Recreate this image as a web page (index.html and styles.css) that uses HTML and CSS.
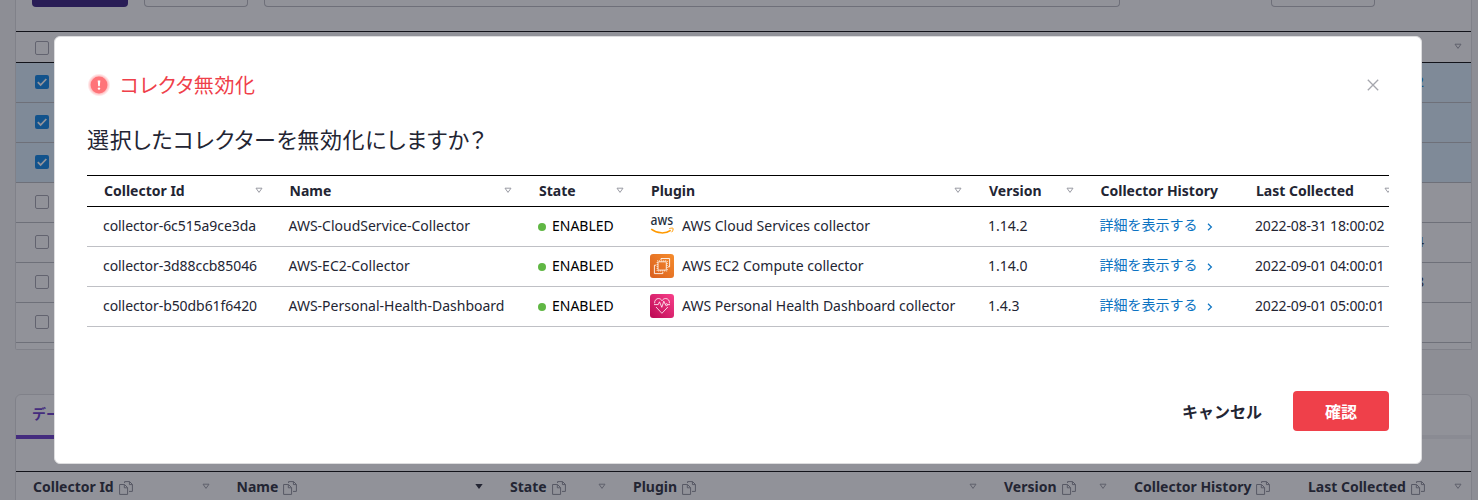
FILE: index.html
```
<!DOCTYPE html>
<html lang="ja">
<head>
<meta charset="utf-8">
<title>コレクタ無効化</title>
<link rel="stylesheet" href="styles.css">
</head>
<body>
<svg class="defs" width="0" height="0">
  <symbol id="sort" viewBox="0 0 8 7"><path d="M1 1.2h6L4 5.4z" fill="none" stroke="currentColor" stroke-width="1"/></symbol>
  <symbol id="sort-on" viewBox="0 0 8 7"><path d="M.3 1h7.4L4 6z" fill="currentColor"/></symbol>
  <symbol id="copy" viewBox="0 0 14 14"><path d="M4.1 3.5H.6v9.900h8V6.600L5.500 3.500H4.100M5.300 3.700v3.100h3.100M5.600 2V.6h5l2.800 2.800v7H10M10.400.7v2.900h2.900" fill="none" stroke="currentColor" stroke-width="1"/></symbol>
  <symbol id="check" viewBox="0 0 14 14"><path d="M2.800 7.200l2.800 2.800 5.700-6" fill="none" stroke="#fff" stroke-width="1.800"/></symbol>
</svg>
<div class="page">
  <section class="card list">
    <div class="toolbar"><span class="btn solid"></span><span class="btn actions"></span><span class="btn search"></span><span class="btn paging"></span></div>
    <div class="row head"><i class="box"></i><svg class="sort"><use href="#sort"/></svg></div>
    <div class="row picked"><i class="box on"><svg><use href="#check"/></svg></i><a class="link">2</a></div>
    <div class="row picked"><i class="box on"><svg><use href="#check"/></svg></i></div>
    <div class="row picked"><i class="box on"><svg><use href="#check"/></svg></i></div>
    <div class="row"><i class="box"></i></div>
    <div class="row"><i class="box"></i><span>4</span></div>
    <div class="row"><i class="box"></i><span>8</span></div>
    <div class="row"><i class="box"></i></div>
  </section>
  <section class="card detail">
    <div class="tabs"><span class="tab">データ</span></div>
    <div class="gap"></div>
    <div class="cols">
      <b>Collector Id<svg class="copy"><use href="#copy"/></svg><svg class="sort"><use href="#sort"/></svg></b>
      <b>Name<svg class="copy"><use href="#copy"/></svg><svg class="sort active"><use href="#sort-on"/></svg></b>
      <b>State<svg class="copy"><use href="#copy"/></svg><svg class="sort"><use href="#sort"/></svg></b>
      <b>Plugin<svg class="copy"><use href="#copy"/></svg><svg class="sort"><use href="#sort"/></svg></b>
      <b>Version<svg class="copy"><use href="#copy"/></svg><svg class="sort"><use href="#sort"/></svg></b>
      <b>Collector History<svg class="copy"><use href="#copy"/></svg></b>
      <b>Last Collected<svg class="copy"><use href="#copy"/></svg><svg class="sort"><use href="#sort"/></svg></b>
    </div>
  </section>
</div>
<div class="backdrop"></div>
<div class="modal">
  <header class="title">
    <svg class="alert" viewBox="0 0 24 24"><defs><radialGradient id="glow"><stop offset=".65" stop-color="#ff6a70" stop-opacity=".6"/><stop offset="1" stop-color="#ff6a70" stop-opacity="0"/></radialGradient></defs><circle cx="12" cy="12" r="11.5" fill="url(#glow)"/><circle cx="12" cy="12" r="8.4" fill="#ff7479"/><path d="M10.700 7.400h2.600l-.5 5.800h-1.600z" fill="#fff"/><circle cx="12" cy="15.600" r="1.200" fill="#fff"/></svg>
    <h1>コレクタ無効化</h1>
    <svg class="close" viewBox="0 0 12 12"><path d="M.8.8l10.400 10.400M11.200.8L.8 11.200" stroke="#a5a6ad" stroke-width="1.300"/></svg>
  </header>
  <h2>選択したコレクターを無効化にしますか？</h2>
  <div class="scroll">
    <div class="grid heads">
      <b>Collector Id<svg class="sort"><use href="#sort"/></svg></b><b>Name<svg class="sort"><use href="#sort"/></svg></b><b>State<svg class="sort"><use href="#sort"/></svg></b><b>Plugin<svg class="sort"><use href="#sort"/></svg></b><b>Version<svg class="sort"><use href="#sort"/></svg></b><b>Collector History</b><b>Last Collected<svg class="sort"><use href="#sort"/></svg></b>
    </div>
    <div class="grid">
      <span class="id">collector-6c515a9ce3da</span><span>AWS-CloudService-Collector</span><span class="state">ENABLED</span>
      <span class="plugin"><svg viewBox="0 0 24 24"><text x="0.6" y="11.200" class="aws" textLength="22.600" lengthAdjust="spacingAndGlyphs">aws</text><path d="M1.200 15.200c6 4.700 14.500 4.700 19.500 1.100" fill="none" stroke="#f90" stroke-width="1.500"/><path d="M19.200 14.700c2-.8 4.200-.8 4 .1-.1 1.300-.7 2.600-1.500 3.400" fill="none" stroke="#f90" stroke-width="1"/></svg>AWS Cloud Services collector</span>
      <span>1.14.2</span><span class="history"><a>詳細を表示する</a><svg viewBox="0 0 6 8"><path d="M1 .8L4.400 4 1 7.200" fill="none" stroke="#0c73c2" stroke-width="1.200"/></svg></span><span class="date">2022-08-31 18:00:02</span>
    </div>
    <div class="grid">
      <span class="id">collector-3d88ccb85046</span><span>AWS-EC2-Collector</span><span class="state">ENABLED</span>
      <span class="plugin"><svg viewBox="0 0 24 24"><defs><linearGradient id="ec" x1="0" y1="1" x2="1" y2="0"><stop stop-color="#d95f20"/><stop offset="1" stop-color="#f68c2c"/></linearGradient></defs><rect width="24" height="24" rx="3" fill="url(#ec)"/><g fill="none" stroke="#fff" stroke-width=".85"><rect x="8" y="7.800" width="8.300" height="8.300" rx=".8"/><path d="M11 6V4.500h8.600v8.300H18M6.200 11.200H4.400v8.400h8.400V18"/><path d="M7.200 6.900h10v10h-10z" stroke-dasharray="1 1" stroke-width="1.100" opacity=".8"/></g></svg>AWS EC2 Compute collector</span>
      <span>1.14.0</span><span class="history"><a>詳細を表示する</a><svg viewBox="0 0 6 8"><path d="M1 .8L4.400 4 1 7.200" fill="none" stroke="#0c73c2" stroke-width="1.200"/></svg></span><span class="date">2022-09-01 04:00:01</span>
    </div>
    <div class="grid">
      <span class="id">collector-b50db61f6420</span><span>AWS-Personal-Health-Dashboard</span><span class="state">ENABLED</span>
      <span class="plugin"><svg viewBox="0 0 24 24"><defs><linearGradient id="ph" x1="0" y1="1" x2="1" y2="0"><stop stop-color="#bb0853"/><stop offset="1" stop-color="#f8408a"/></linearGradient></defs><rect width="24" height="24" rx="3" fill="url(#ph)"/><g fill="none" stroke="#fff" stroke-width=".8" stroke-linejoin="round"><path d="M4.600 9.300C4.300 6.300 6.500 4.400 8.700 4.500c1.400.1 2.500.9 3.300 2.200 1-1.500 2.200-2.200 3.600-2.200 2.400 0 4.200 2.100 3.800 4.800"/><path d="M4 10.600h4.200l1.300-2.800 2.300 5.500 2-6.100 1.500 3.400M17.500 10.600H20M6 13l5.900 6.300 6-6.300"/><circle cx="16.500" cy="10.700" r="1"/></g></svg>AWS Personal Health Dashboard collector</span>
      <span>1.4.3</span><span class="history"><a>詳細を表示する</a><svg viewBox="0 0 6 8"><path d="M1 .8L4.400 4 1 7.200" fill="none" stroke="#0c73c2" stroke-width="1.200"/></svg></span><span class="date">2022-09-01 05:00:01</span>
    </div>
  </div>
  <footer><button class="cancel">キャンセル</button><button class="ok">確認</button></footer>
</div>
</body>
</html>
```
FILE: styles.css
```
* { box-sizing: border-box; }
body { margin: 0; width: 1478px; height: 500px; overflow: hidden; position: relative; background: #f7f7f7; color: #232533; font: 14px/20px "Noto Sans", "Noto Sans CJK JP", sans-serif; }
svg { display: block; flex: none; }
.defs { position: absolute; }
.page { height: 500px; overflow: hidden; padding: 0 6px 0 15px; }
.card { border: 1px solid #dddddf; background: #fff; }
.list { height: 350px; border-top: 0; border-radius: 0 0 2px 2px; }
.toolbar { height: 31px; display: flex; padding-left: 16px; }
.btn { height: 7px; border: 1px solid #b8b9bf; border-top: 0; border-radius: 0 0 4px 4px; }
.btn.solid { width: 96px; background: #2f1478; border: 0; }
.btn.actions { width: 104px; margin-left: 16px; }
.btn.search { width: 856px; margin-left: 16px; }
.btn.paging { width: 104px; margin-left: 151px; }
.row { height: 40px; display: flex; align-items: center; justify-content: space-between; padding: 0 47px 1px 19px; border-bottom: 1px solid #b9babf; }
.row.head { height: 32px; border-top: 1px solid #000; border-bottom-color: #000; padding: 1px 9px 0 19px; }
.row.head .sort { margin-top: -3px; }
.row.picked { background: #dbeefc; }
.link { color: #0080e5; }
.box { width: 14px; height: 14px; border: 1px solid #a0a1aa; border-radius: 2px; }
.box.on { border: 0; background: #0080e5; }
.box svg { width: 14px; height: 14px; }
.sort { width: 8px; height: 7px; margin-left: auto; color: #999aa3; }
.sort.active { color: #232533; }
.detail { margin-top: 44px; height: 120px; border-radius: 6px 6px 0 0; }
.tabs { height: 44px; border-bottom: 4px solid #f0f0f2; }
.tab { display: block; width: 90px; height: 44px; padding: 9px 16px; border-bottom: 4px solid #6532c8; color: #6532c8; font-weight: 700; }
.gap { height: 32px; }
.cols { display: grid; grid-template-columns: 203.500px 273.500px 123px 371px 130px 174px 181px; border-top: 1px solid #000; height: 31px; }
.cols b { display: flex; align-items: center; padding: 0 10px 1px 17px; white-space: nowrap; }
.copy { width: 14px; height: 14px; margin: 2px 0 0 5px; color: #898a94; }
.cols .sort { margin-top: -1px; }
.backdrop { position: absolute; inset: 0; background: rgba(35, 37, 51, .5); }
.modal { position: absolute; left: 54px; top: 36px; width: 1368px; height: 428px; padding: 0 32px; border: 1px solid #dddddf; border-radius: 6px; background: #fff; }
.title { display: flex; align-items: center; height: 48px; margin-top: 24px; color: #ef404a; }
h1, h2 { margin: 0; font-weight: 400; white-space: nowrap; font-feature-settings: "palt"; letter-spacing: .64px; }
h1 { font-size: 20px; line-height: 32px; margin: 1px 0 0 9px; }
h2 { font-size: 22px; line-height: 32px; margin-top: 14px; }
.alert { width: 24px; height: 24px; }
.close { width: 12px; height: 12px; margin: 0 10px 0 auto; }
.scroll { overflow: hidden; height: 152px; margin-top: 20px; }
.grid { width: 1316px; height: 40px; display: grid; grid-template-columns: 185.500px 249.500px 112px 338px 111.500px 155.500px 163px; border-bottom: 1px solid #bfc0c5; white-space: nowrap; }
.grid > * { display: flex; align-items: center; padding: 0 0 1px 16px; }
.heads { height: 32px; border-top: 1px solid #000; border-bottom-color: #000; }
.heads > b { padding: 0 10px 0 17px; }
.heads .sort { margin-top: -2px; }
.id { letter-spacing: -.07px; }
.date { letter-spacing: -.15px; }
.state { color: #000; }
.state::before { content: ""; width: 8px; height: 8px; margin: 2px 6px 0 0; border-radius: 50%; background: #60b744; }
.plugin svg { width: 24px; height: 24px; margin-right: 8px; overflow: visible; }
.aws { font: 500 13.500px "Noto Sans", sans-serif; fill: #252f3e; }
.history a { color: #0c73c2; padding-bottom: 2px; }
.history svg { width: 6px; height: 8px; margin-left: 9px; margin-top: 1px; }
footer { display: flex; justify-content: flex-end; margin-top: 64px; }
h1 + .close { margin-top: 0; }
button { height: 40px; padding: 0 0 1px; border: 0; border-radius: 4px; background: none; color: #232533; font: 700 16px "Noto Sans", "Noto Sans CJK JP", sans-serif; }
.cancel { width: 142px; }
.ok { width: 96px; background: #ef404a; color: #fff; }
```
